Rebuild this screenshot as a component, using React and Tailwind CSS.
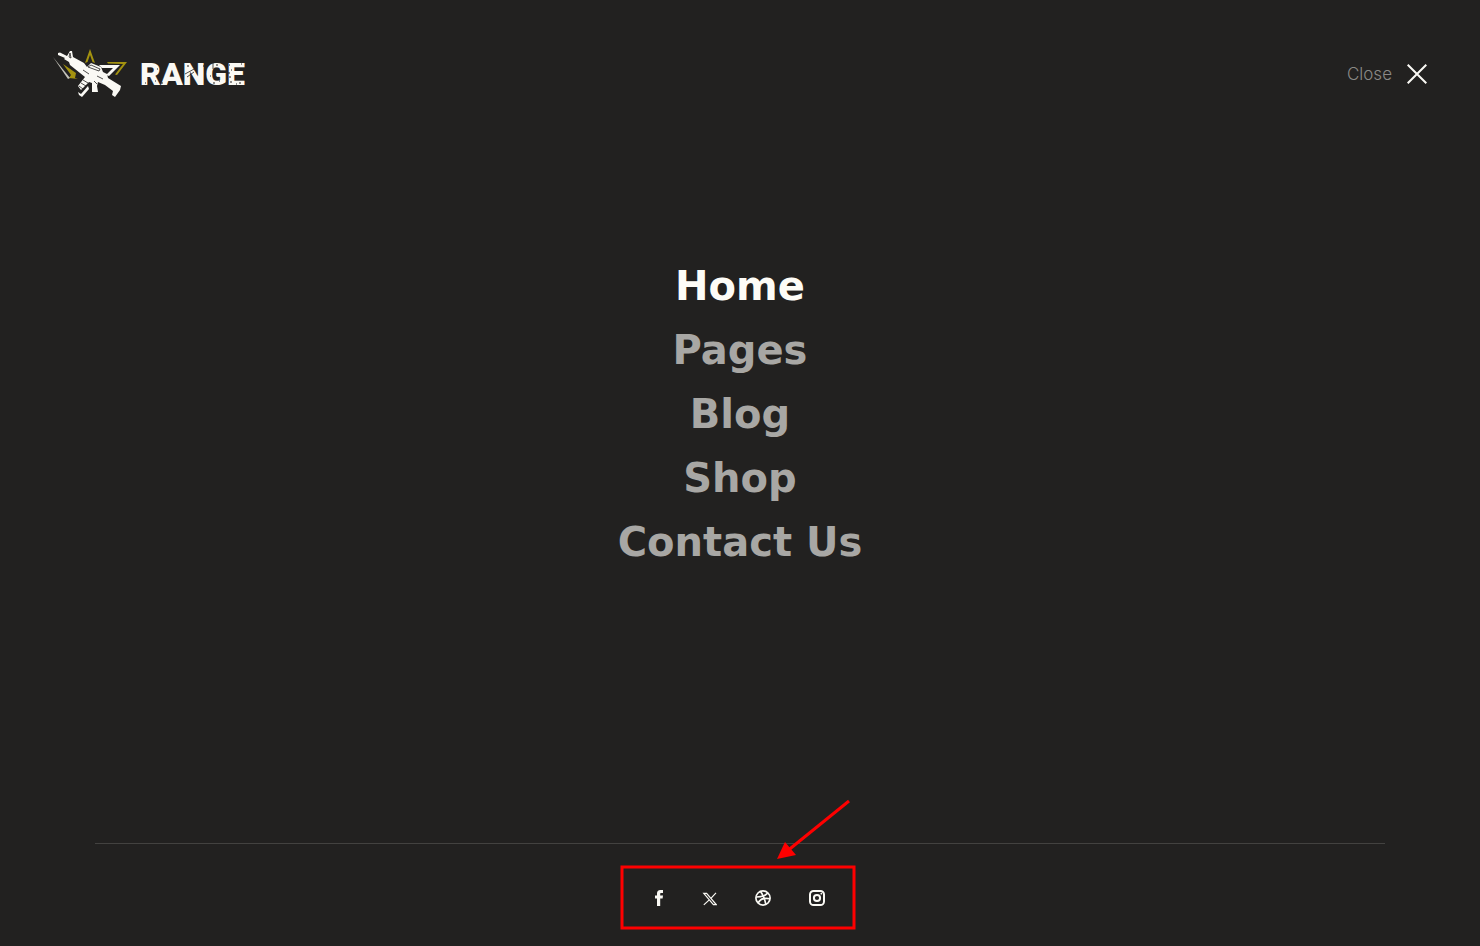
import React from "react";

const links = ["Home", "Pages", "Blog", "Shop", "Contact Us"];

function RifleMark() {
  return (
    <svg viewBox="0 0 75 50" className="h-[50px] w-[75px] shrink-0" aria-hidden="true">
      <g fill="#a3920f">
        <path d="M37 0 L32 14 L34.500 13 L37 6 L39.500 13 L42 14 Z" />
        <path d="M54 13 L74 13 L64 26 L62 25.500 L70 15 L55 14.500 Z" />
        <path d="M10 15 L23 24 L22 29 L25 30 L16 29 L18 26 Z" />
      </g>
      <path d="M0 8 L17 29 L15 30 Z" fill="#c4c3ba" />
      <g fill="#faf9f4">
        <path d="M46 16 H67 L56 27 L53 26 L60 19 H49 Z" />
        <path d="M5 4 L7 3.500 L14 7 L17 2 L19 2 L20 8 L31 14 L34 18 L38 14 L48 18 L50 23 L54 25 L55 29 L68 37 L67 41 L62 48 L59 46 L60 42 L52 36 L45 33 L44 37 L45 43 L39 43 L39 34 L36 33 L28 41 L25 37 L32 28 L27 24 L17 16 L16 13 L11 10 L12 9 L5 6 Z" />
        <path d="M25 43 L28 45 L35 37 L36 40 L29 48 L26 46 Z" />
      </g>
      <g stroke="#222120" fill="none" strokeWidth="0.800">
        <path d="M35 18 L38 16 L47 20 L46 22 Z M26 37 L30 40 M28 34 L33 37 M30 31 L35 34 M17 4 L16 8 L18 9 Z M41 32 L44 35 M30 21 L36 25 M44 27 L50 30" />
      </g>
    </svg>
  );
}

function Logo() {
  return (
    <a href="#" aria-label="Range" className="flex items-center gap-3">
      <RifleMark />
      <span className="relative font-['Roboto'] text-[32px] leading-[50px] font-black">
        RANGE
        <svg viewBox="0 0 106 26" className="absolute top-3 left-0 h-[26px] w-[106px]" fill="none" stroke="#222120" aria-hidden="true">
          <path d="M45 13 L56 7 M47 16 L54 11 M73 2 V8" strokeWidth="0.800" />
          <path d="M15 20h1 M21 22h2 M33 21h1 M47 5h2 M51 20h1 M66 21h2 M75 16h2 M70 15h1 M79 20h1 M89 4h1 M91 9h1 M89 16h2 M90 21h2 M96 23h1 M99 22h2 M101 3h1 M63 5h1 M76 4h2 M88 12h2 M73 22h2 M5 22h1 M17 8h1" strokeWidth="1" />
        </svg>
      </span>
    </a>
  );
}

function Facebook() {
  return (
    <svg viewBox="0 0 8 16" className="h-4 w-2" fill="currentColor" aria-hidden="true">
      <path d="M2 16V8.500H0V5.500H2V3.500C2 1.300 3.200 0 5.300 0H8V3H6.200C5.400 3 5.200 3.400 5.200 4V5.500H8L7.600 8.500H5.200V16Z" />
    </svg>
  );
}

function XLogo() {
  return (
    <svg viewBox="0 0 16 16" className="h-4 w-4" fill="none" stroke="currentColor" aria-hidden="true">
      <path d="M2.800 3.400H5.600L15.200 14.600H12.400Z M15 2.900L9.900 8.300M8 10.100L2.800 14.900" strokeWidth="1.200" />
    </svg>
  );
}

function Dribbble() {
  return (
    <svg viewBox="0 0 16 16" className="h-4 w-4" fill="none" stroke="currentColor" strokeWidth="1.700" aria-hidden="true">
      <circle cx="8" cy="8" r="7.100" />
      <path d="M5.300 1.300C8 4.600 9.900 8.800 10.900 14.500M1 7C6 7.100 10.200 5.900 13 2.900M3 13.200C5.200 9 9.400 7.400 15 8.800" />
    </svg>
  );
}

function Instagram() {
  return (
    <svg viewBox="0 0 16 16" className="h-4 w-4" fill="none" stroke="currentColor" strokeWidth="2" aria-hidden="true">
      <rect x="1" y="1" width="14" height="14" rx="3.600" />
      <circle cx="8" cy="8" r="3.100" />
      <circle cx="12.300" cy="3.700" r="0.900" fill="currentColor" stroke="none" />
    </svg>
  );
}

const socials = [
  { name: "Facebook", Icon: Facebook },
  { name: "X", Icon: XLogo },
  { name: "Dribbble", Icon: Dribbble },
  { name: "Instagram", Icon: Instagram },
];

export default function App() {
  return (
    <div className="flex min-h-screen flex-col bg-[#222120] text-[#faf9f4]">
      <header className="flex items-center justify-between px-[53px] pt-[49px]">
        <Logo />
        <button type="button" className="flex items-center gap-[15px] font-['Inter'] text-[17px] leading-6 font-light text-[#8a8986]">
          Close
          <svg viewBox="0 0 20 20" className="h-5 w-5 text-[#faf9f4]" fill="none" stroke="currentColor" strokeWidth="2" aria-hidden="true">
            <path d="M0.700 0.700L19.300 19.300M19.300 0.700L0.700 19.300" />
          </svg>
        </button>
      </header>

      <main className="flex flex-1 flex-col items-center justify-center pb-[115px]">
        <nav aria-label="Main">
          <ul className="text-center font-['DejaVu_Sans'] text-[40px] leading-[64px] font-bold">
            {links.map((label, i) => (
              <li key={label}>
                <a href="#" className={i === 0 ? "text-[#fdfcf7]" : "text-[#a8a7a4]"}>{label}</a>
              </li>
            ))}
          </ul>
        </nav>
      </main>

      <footer className="relative mx-[95px] border-t border-[#434240] pt-[46px] pb-10">
        <ul className="flex items-center justify-center gap-[38px]">
          {socials.map(({ name, Icon }) => (
            <li key={name}>
              <a href="#" aria-label={name} className="block"><Icon /></a>
            </li>
          ))}
        </ul>
        <svg viewBox="0 0 240 136" className="pointer-events-none absolute -top-12 left-1/2 h-[136px] w-60 -translate-x-1/2" aria-hidden="true">
          <rect x="2" y="71" width="232" height="61" fill="none" stroke="#fe0000" strokeWidth="3" />
          <path d="M229 5L166 56" stroke="#fe0000" strokeWidth="3" />
          <path d="M157 63L165 46L176 59Z" fill="#fe0000" />
        </svg>
      </footer>
    </div>
  );
}
